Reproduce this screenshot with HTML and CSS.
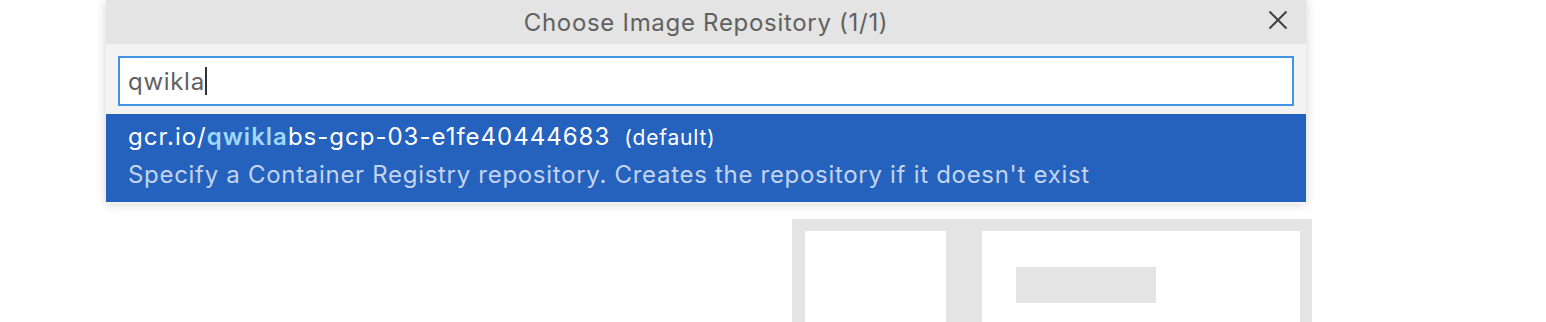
FILE: index.html
```html
<!DOCTYPE html>
<html>
<head>
<meta charset="utf-8">
<link rel="stylesheet" href="styles.css">
</head>
<body>
<div class="page">
  <div class="canvas">
    <div class="frame">
      <div class="pane pane-left"></div>
      <div class="pane pane-right">
        <div class="placeholder"></div>
      </div>
    </div>
  </div>

  <div class="quickpick">
    <div class="titlebar">
      <span class="title">Choose Image Repository (1/1)</span>
      <button class="close" aria-label="Close">
        <svg width="20" height="20" viewBox="0 0 20 20"><path d="M1.5 1.5 L18.5 18.5 M18.5 1.5 L1.5 18.5" stroke="#424242" stroke-width="2" fill="none"/></svg>
      </button>
    </div>
    <div class="inputwrap">
      <div class="input"><span class="value">qwikla</span><span class="caret"></span></div>
    </div>
    <div class="list">
      <div class="item selected">
        <div class="label"><span>gcr.io/</span><span class="hl">qwikla</span><span>bs-gcp-03-e1fe40444683</span><span class="detail">(default)</span></div>
        <div class="desc">Specify a Container Registry repository. Creates the repository if it doesn't exist</div>
      </div>
    </div>
  </div>
</div>
</body>
</html>
```
FILE: styles.css
```css
html, body {
  margin: 0;
  padding: 0;
  background: #ffffff;
}
body {
  font-family: Inter, "Noto Sans", "Liberation Sans", sans-serif;
  width: 1546px;
  height: 322px;
  overflow: hidden;
}
.page {
  position: relative;
  width: 1546px;
  height: 322px;
  overflow: hidden;
}
.canvas {
  padding: 219px 0 0 792px;
}
.frame {
  width: 520px;
  height: 103px;
  background: #e4e4e4;
  box-sizing: border-box;
  padding: 12px 12px 0 13px;
  display: flex;
  gap: 36px;
}
.pane {
  background: #ffffff;
  height: 91px;
}
.pane-left {
  width: 141px;
}
.pane-right {
  flex: 1;
  padding: 36px 0 0 34px;
  box-sizing: border-box;
}
.placeholder {
  width: 140px;
  height: 36px;
  background: #e4e4e4;
}
.quickpick {
  position: absolute;
  left: 106px;
  top: 0;
  width: 1200px;
  background: #f3f3f3;
  box-shadow: 0 0 10px rgba(0,0,0,0.18);
  padding-bottom: 2px;
  letter-spacing: 0.7px;
}
.titlebar {
  position: relative;
  height: 44px;
  background: #e4e4e4;
  display: flex;
  align-items: center;
  justify-content: center;
}
.title {
  font-size: 24px;
  color: #616161;
}
.close {
  position: absolute;
  right: 18px;
  top: 10px;
  width: 20px;
  height: 20px;
  padding: 0;
  border: 0;
  background: transparent;
  display: flex;
  align-items: center;
  justify-content: center;
}
.inputwrap {
  padding: 12px 12px 8px 12px;
}
.input {
  height: 50px;
  box-sizing: border-box;
  border: 2px solid #4394e6;
  background: #ffffff;
  display: flex;
  align-items: center;
  padding-left: 8px;
}
.value {
  font-size: 24px;
  color: #616161;
}
.caret {
  width: 2px;
  height: 28px;
  background: #333333;
  margin-left: 0;
}
.item {
  height: 88px;
  box-sizing: border-box;
  padding: 4px 22px 0 22px;
}
.selected {
  background: #2562bd;
}
.label {
  height: 38px;
  line-height: 38px;
  font-size: 24px;
  color: #ffffff;
  white-space: nowrap;
  letter-spacing: 1px;
}
.hl {
  font-weight: 600;
  color: #9fd9ff;
}
.detail {
  font-size: 21px;
  margin-left: 14px;
  letter-spacing: 0.8px;
}
.desc {
  height: 38px;
  line-height: 38px;
  font-size: 24px;
  color: #c4d4ee;
  white-space: nowrap;
}
```
